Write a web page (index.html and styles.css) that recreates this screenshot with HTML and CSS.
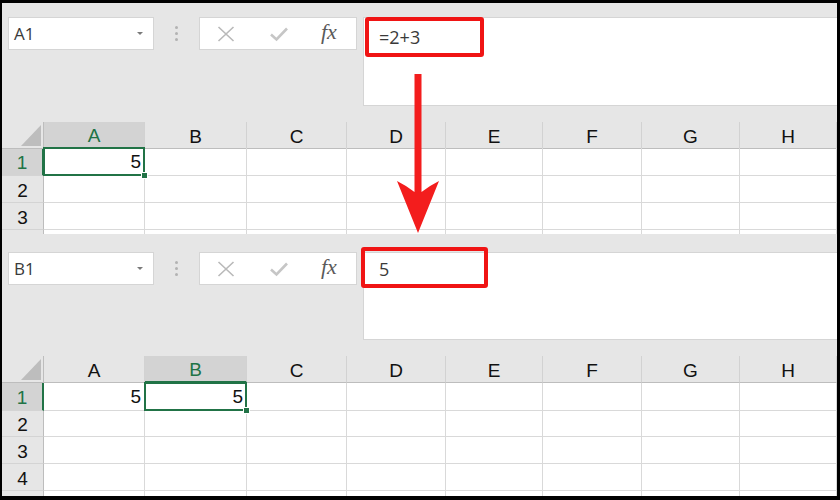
FILE: index.html
```html
<!DOCTYPE html>
<html>
<head>
<meta charset="utf-8">
<link rel="stylesheet" href="styles.css">
</head>
<body>
<div class="frame">
  <section class="pane pane-top">
    <div class="toolbar">
      <div class="namebox"><span>A1</span><span class="caret"></span></div>
      <div class="dots"><i></i><i></i><i></i></div>
      <div class="btns">
        <svg class="ic-x" width="18" height="16" viewBox="0 0 18 16"><path d="M1.5 1 L16.5 15 M16.5 1 L1.5 15" stroke="#b9b9b9" stroke-width="1.6" fill="none"/></svg>
        <svg class="ic-ok" width="18" height="16" viewBox="0 0 18 16"><path d="M1 8.5 L6.5 13.5 L17 2.5" stroke="#c6c6c6" stroke-width="2.6" fill="none"/></svg>
        <span class="fx">fx</span>
      </div>
      <div class="fbar"><span class="ftext">=2+3</span><div class="callout callout-top"></div></div>
    </div>
    <div class="sheet sheet-top">
      <div class="row hdr">
        <div class="corner"></div>
        <div class="ch sel">A</div><div class="ch">B</div><div class="ch">C</div><div class="ch">D</div><div class="ch">E</div><div class="ch">F</div><div class="ch">G</div><div class="ch">H</div>
      </div>
      <div class="row r1">
        <div class="rh sel">1</div>
        <div class="cell active">5<span class="handle"></span></div><div class="cell"></div><div class="cell"></div><div class="cell"></div><div class="cell"></div><div class="cell"></div><div class="cell"></div><div class="cell"></div>
      </div>
      <div class="row">
        <div class="rh">2</div>
        <div class="cell"></div><div class="cell"></div><div class="cell"></div><div class="cell"></div><div class="cell"></div><div class="cell"></div><div class="cell"></div><div class="cell"></div>
      </div>
      <div class="row">
        <div class="rh">3</div>
        <div class="cell"></div><div class="cell"></div><div class="cell"></div><div class="cell"></div><div class="cell"></div><div class="cell"></div><div class="cell"></div><div class="cell"></div>
      </div>
      <div class="row">
        <div class="rh"></div>
        <div class="cell"></div><div class="cell"></div><div class="cell"></div><div class="cell"></div><div class="cell"></div><div class="cell"></div><div class="cell"></div><div class="cell"></div>
      </div>
    </div>
  </section>

  <section class="pane pane-bottom">
    <div class="toolbar">
      <div class="namebox"><span>B1</span><span class="caret"></span></div>
      <div class="dots"><i></i><i></i><i></i></div>
      <div class="btns">
        <svg class="ic-x" width="18" height="16" viewBox="0 0 18 16"><path d="M1.5 1 L16.5 15 M16.5 1 L1.5 15" stroke="#b9b9b9" stroke-width="1.6" fill="none"/></svg>
        <svg class="ic-ok" width="18" height="16" viewBox="0 0 18 16"><path d="M1 8.5 L6.5 13.5 L17 2.5" stroke="#c6c6c6" stroke-width="2.6" fill="none"/></svg>
        <span class="fx">fx</span>
      </div>
      <div class="fbar fbar-bottom"><span class="ftext">5</span><div class="callout callout-bottom"></div></div>
    </div>
    <div class="sheet sheet-bottom">
      <div class="row hdr">
        <div class="corner"></div>
        <div class="ch">A</div><div class="ch sel">B</div><div class="ch">C</div><div class="ch">D</div><div class="ch">E</div><div class="ch">F</div><div class="ch">G</div><div class="ch">H</div>
      </div>
      <div class="row r1">
        <div class="rh sel">1</div>
        <div class="cell">5</div><div class="cell active">5<span class="handle"></span></div><div class="cell"></div><div class="cell"></div><div class="cell"></div><div class="cell"></div><div class="cell"></div><div class="cell"></div>
      </div>
      <div class="row r-short">
        <div class="rh">2</div>
        <div class="cell"></div><div class="cell"></div><div class="cell"></div><div class="cell"></div><div class="cell"></div><div class="cell"></div><div class="cell"></div><div class="cell"></div>
      </div>
      <div class="row">
        <div class="rh">3</div>
        <div class="cell"></div><div class="cell"></div><div class="cell"></div><div class="cell"></div><div class="cell"></div><div class="cell"></div><div class="cell"></div><div class="cell"></div>
      </div>
      <div class="row">
        <div class="rh">4</div>
        <div class="cell"></div><div class="cell"></div><div class="cell"></div><div class="cell"></div><div class="cell"></div><div class="cell"></div><div class="cell"></div><div class="cell"></div>
      </div>
      <div class="row">
        <div class="rh"></div>
        <div class="cell"></div><div class="cell"></div><div class="cell"></div><div class="cell"></div><div class="cell"></div><div class="cell"></div><div class="cell"></div><div class="cell"></div>
      </div>
    </div>
  </section>

  <svg class="arrow" width="840" height="500" viewBox="0 0 840 500">
    <path d="M414.5 74 L421.5 74 L421.5 192 Q429 186 439 181 L418 233 L397 181 Q407 186 414.5 192 Z" fill="#f31d1d"/>
  </svg>
</div>
</body>
</html>
```
FILE: styles.css
```css
html, body {
  margin: 0;
  padding: 0;
  background: #000;
}

.frame {
  width: 840px;
  height: 500px;
  box-sizing: border-box;
  border-style: solid;
  border-color: #000;
  border-width: 3px 3px 4px 2px;
  background: #e6e6e6;
  position: relative;
  overflow: hidden;
  font-family: "Liberation Sans", Arial, sans-serif;
}

.pane {
  display: flex;
  flex-direction: column;
  padding-top: 14px;
  box-sizing: border-box;
  overflow: hidden;
}

.pane-top {
  height: 235px;
}

.pane-bottom {
  height: 258px;
}

.toolbar {
  display: flex;
  align-items: flex-start;
  padding-left: 6px;
}

.namebox {
  width: 146px;
  height: 33px;
  box-sizing: border-box;
  background: #fff;
  border: 1px solid #d5d5d5;
  display: flex;
  align-items: center;
  justify-content: space-between;
  padding: 0 10px 0 5px;
  font-family: "Open Sans", sans-serif;
  font-size: 17px;
  color: #3a3a3a;
}

.caret {
  width: 0;
  height: 0;
  border-left: 3px solid transparent;
  border-right: 3px solid transparent;
  border-top: 3px solid #7a7a7a;
}

.dots {
  width: 45px;
  height: 33px;
  display: flex;
  flex-direction: column;
  align-items: center;
  justify-content: center;
  gap: 3px;
}

.dots i {
  width: 3px;
  height: 3px;
  background: #b2b2b2;
  border-radius: 50%;
}

.btns {
  width: 158px;
  height: 33px;
  box-sizing: border-box;
  background: #fff;
  border: 1px solid #d5d5d5;
  display: flex;
  align-items: center;
}

.ic-x {
  margin-left: 17px;
}

.ic-ok {
  margin-left: 35px;
}

.fx {
  margin-left: 33px;
  font-family: "Liberation Serif", serif;
  font-style: italic;
  font-size: 22px;
  color: #5a5a5a;
  line-height: 1;
  margin-top: -4px;
}

.fbar {
  flex: 1;
  height: 89px;
  margin-left: 6px;
  box-sizing: border-box;
  background: #fff;
  border: 1px solid #d5d5d5;
  border-right: none;
  position: relative;
  padding: 7px 15px 0;
}

.fbar-bottom {
  height: 88px;
  padding-top: 4px;
}

.ftext {
  font-family: "Open Sans", sans-serif;
  font-size: 18px;
  line-height: 24px;
  color: #3a3a3a;
}

.callout {
  position: absolute;
  border: 4px solid #f01414;
  border-radius: 3px;
  box-sizing: border-box;
}

.callout-top {
  left: 1px;
  top: -1px;
  width: 119px;
  height: 40px;
}

.callout-bottom {
  left: -3px;
  top: -6px;
  width: 127px;
  height: 41px;
}

.sheet {
  margin-top: 16px;
  background: #fff;
  overflow: hidden;
}

.sheet-top {
  height: 112px;
}

.sheet-bottom {
  height: 150px;
}

.row {
  display: grid;
  grid-template-columns: 42px 101px 102px 100px 99px 97px 99px 98px 1fr;
  height: 27px;
}

.row.r1 {
  height: 28px;
}

.row.r-short {
  height: 26px;
}

.row.hdr {
  height: 26px;
}

.sheet-bottom .row.hdr {
  height: 27px;
}

.corner {
  background: #e6e6e6;
  border-right: 1px solid #bdbdbd;
  border-bottom: 1px solid #bdbdbd;
  position: relative;
}

.corner::after {
  content: "";
  position: absolute;
  right: 2px;
  bottom: 2px;
  width: 20px;
  height: 21px;
  background: #bdbdbd;
  clip-path: polygon(100% 0, 100% 100%, 0 100%);
}

.ch {
  background: #e6e6e6;
  border-right: 1px solid #d2d2d2;
  border-bottom: 1px solid #bdbdbd;
  display: flex;
  align-items: center;
  justify-content: center;
  padding-top: 3px;
  box-sizing: border-box;
  font-size: 19px;
  color: #111;
}

.ch.sel {
  background: #d3d3d3;
  color: #217346;
  border-bottom: 2px solid #217346;
}

.rh {
  background: #e6e6e6;
  border-right: 1px solid #bdbdbd;
  border-bottom: 1px solid #d4d4d4;
  display: flex;
  align-items: center;
  justify-content: center;
  padding-top: 3px;
  box-sizing: border-box;
  font-size: 19px;
  color: #111;
}

.rh.sel {
  background: #d3d3d3;
  color: #217346;
  border-right: 2px solid #217346;
}

.cell {
  border-right: 1px solid #d9d9d9;
  border-bottom: 1px solid #d9d9d9;
  box-sizing: border-box;
  display: flex;
  align-items: flex-end;
  justify-content: flex-end;
  padding: 0 3px 2px 0;
  font-size: 19px;
  line-height: 22px;
  color: #111;
  position: relative;
}

.cell.active::after {
  content: "";
  position: absolute;
  left: -1px;
  top: -1px;
  right: -1px;
  bottom: -1px;
  border: 2px solid #217346;
}

.handle {
  position: absolute;
  right: -4px;
  bottom: -4px;
  width: 5px;
  height: 5px;
  background: #217346;
  border: 1px solid #fff;
  z-index: 2;
}

.arrow {
  position: absolute;
  left: -2px;
  top: -3px;
  pointer-events: none;
}
```
